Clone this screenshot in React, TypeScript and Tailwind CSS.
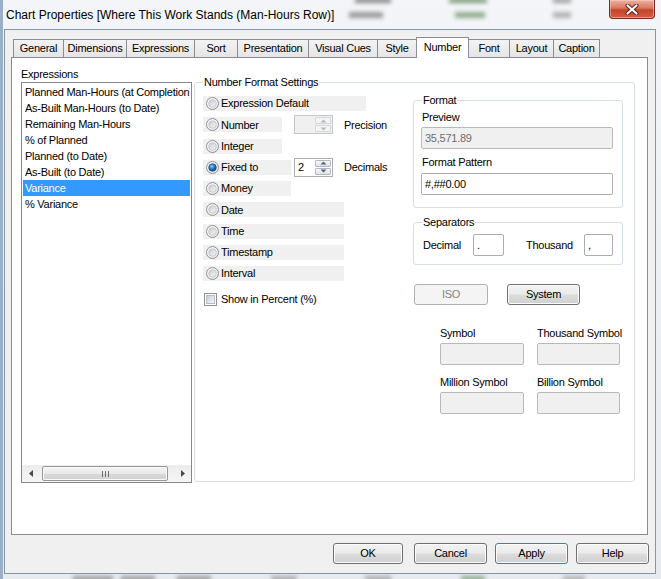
import React from 'react';

const tabs = [
  { label: 'General', w: 'w-[51px]' },
  { label: 'Dimensions', w: 'w-[64px]' },
  { label: 'Expressions', w: 'w-[69px]' },
  { label: 'Sort', w: 'w-[44px]' },
  { label: 'Presentation', w: 'w-[72px]' },
  { label: 'Visual Cues', w: 'w-[70px]' },
  { label: 'Style', w: 'w-[40px]' },
  { label: 'Number', w: 'w-[53px]', active: true },
  { label: 'Font', w: 'w-[42px]' },
  { label: 'Layout', w: 'w-[45px]' },
  { label: 'Caption', w: 'w-[47px]' },
];

const expressions = [
  'Planned Man-Hours (at Completion)',
  'As-Built Man-Hours (to Date)',
  'Remaining Man-Hours',
  '% of Planned',
  'Planned (to Date)',
  'As-Built (to Date)',
  'Variance',
  '% Variance',
];

type Fmt = { label: string; w: string; checked?: boolean; spin?: 'precision' | 'decimals' };

const formats: Fmt[] = [
  { label: 'Expression Default', w: 'w-[163px]' },
  { label: 'Number', w: 'w-[79px]', spin: 'precision' },
  { label: 'Integer', w: 'w-[79px]' },
  { label: 'Fixed to', w: 'w-[88px]', checked: true, spin: 'decimals' },
  { label: 'Money', w: 'w-[88px]' },
  { label: 'Date', w: 'w-[141px]' },
  { label: 'Time', w: 'w-[141px]' },
  { label: 'Timestamp', w: 'w-[141px]' },
  { label: 'Interval', w: 'w-[141px]' },
];

// blurred bits of the window behind, seen through the glass frame
const blobs = [
  'left-[352px] top-[-2px] w-[36px] h-[5px] bg-[#8a8a8a]',
  'left-[446px] top-[-2px] w-[38px] h-[5px] bg-[#7f9f7f]',
  'left-[550px] top-[-2px] w-[18px] h-[5px] bg-[#a0a0a0]',
  'left-[346px] top-[12px] w-[34px] h-[6px] bg-[#9a9a9a]',
  'left-[452px] top-[12px] w-[30px] h-[6px] bg-[#8fae8f]',
  'left-[550px] top-[12px] w-[18px] h-[6px] bg-[#b2b2b2]',
  'left-[70px] bottom-[-2px] w-[40px] h-[5px] bg-[#9a9a9a]',
  'left-[118px] bottom-[-2px] w-[34px] h-[5px] bg-[#9a9a9a]',
  'left-[174px] bottom-[-2px] w-[34px] h-[5px] bg-[#9a9a9a]',
  'left-[268px] bottom-[-2px] w-[26px] h-[5px] bg-[#a8a8a8]',
  'left-[362px] bottom-[-2px] w-[26px] h-[5px] bg-[#a8a8a8]',
  'left-[458px] bottom-[-2px] w-[24px] h-[5px] bg-[#8fa88f]',
  'left-[560px] bottom-[-2px] w-[22px] h-[5px] bg-[#b0b0b0]',
];

const btnBg =
  'bg-[linear-gradient(to_bottom,#f2f2f2_0%,#ebebeb_48%,#dddddd_52%,#cfcfcf_100%)] shadow-[inset_0_0_0_1px_#fbfbfb]';

const Radio: React.FC<{ checked?: boolean }> = ({ checked }) => (
  <svg width="13" height="13" viewBox="0 0 13 13" className="shrink-0">
    <defs>
      <linearGradient id="rdOuter" x1="0" y1="0" x2="1" y2="1">
        <stop offset="0" stopColor="#fdfdfd" />
        <stop offset="1" stopColor="#e6e6e6" />
      </linearGradient>
      <linearGradient id="rdInner" x1="0" y1="0" x2="1" y2="1">
        <stop offset="0" stopColor="#c9ccd1" />
        <stop offset="1" stopColor="#f5f5f5" />
      </linearGradient>
      <radialGradient id="rdDot" cx="0.4" cy="0.35" r="0.7">
        <stop offset="0" stopColor="#8fd0ff" />
        <stop offset="0.45" stopColor="#2c7fcf" />
        <stop offset="1" stopColor="#0e3d75" />
      </radialGradient>
    </defs>
    <circle cx="6.5" cy="6.5" r="6" fill="url(#rdOuter)" stroke="#8e8f8f" />
    <circle
      cx="6.5"
      cy="6.5"
      r="3.8"
      fill={checked ? 'url(#rdDot)' : 'url(#rdInner)'}
      stroke={checked ? '#1b4a7a' : '#b9bcc1'}
      strokeWidth="0.7"
    />
  </svg>
);

const Checkbox: React.FC = () => (
  <div className="w-[13px] h-[13px] shrink-0 border border-[#8e8f8f] bg-white p-[1px]">
    <div className="w-full h-full border border-[#b9bcc1] bg-[linear-gradient(135deg,#cbcfd5,#f6f6f6)]" />
  </div>
);

const Arrow: React.FC<{ up?: boolean; disabled?: boolean }> = ({ up, disabled }) => (
  <svg width="7" height="4" viewBox="0 0 7 4">
    <path d={up ? 'M0.5 3.5 L3.5 0.5 L6.5 3.5 Z' : 'M0.5 0.5 L3.5 3.5 L6.5 0.5 Z'} fill={disabled ? '#b8b8b8' : '#4d6185'} />
  </svg>
);

const Spinner: React.FC<{ value?: string; disabled?: boolean; className?: string }> = ({ value, disabled, className }) => (
  <div
    className={`flex w-[39px] h-[19px] border ${
      disabled ? 'border-[#c3c6ca] bg-[#f0f0f0]' : 'border-[#abadb3] bg-white'
    } ${className ?? ''}`}
  >
    <div className="flex-1 pl-[3px] leading-[17px]">{value}</div>
    <div className="w-[18px] flex flex-col p-[1px] gap-[1px]">
      {[true, false].map((up) => (
        <div
          key={String(up)}
          className={`flex-1 flex items-center justify-center rounded-[1px] border ${
            disabled
              ? 'border-[#d4d6d9] bg-[#f4f4f4]'
              : 'border-[#b5b9bf] bg-[linear-gradient(to_bottom,#f7f8f9,#dde1e6)]'
          }`}
        >
          <Arrow up={up} disabled={disabled} />
        </div>
      ))}
    </div>
  </div>
);

const TextBox: React.FC<{ value?: string; disabled?: boolean; className?: string }> = ({ value, disabled, className }) => (
  <div
    className={`h-[22px] rounded-[2px] border px-[3px] leading-[20px] ${
      disabled ? 'border-[#b6babf] bg-[#f0f0f0] text-[#6d6d6d]' : 'border-[#abadb3] bg-white'
    } ${className ?? ''}`}
  >
    {value}
  </div>
);

const Group: React.FC<{ title: string; className?: string; children: React.ReactNode }> = ({ title, className, children }) => (
  <div className={`border border-[#d5dfe5] rounded-[3px] flex flex-col ${className ?? ''}`}>
    <span className="-mt-[7px] ml-[8px] px-[1px] self-start bg-white leading-[13px]">{title}</span>
    {children}
  </div>
);

const Button: React.FC<{ label: string; className?: string; focused?: boolean; disabled?: boolean }> = ({
  label,
  className,
  focused,
  disabled,
}) => (
  <div
    className={`h-[21px] rounded-[3px] border flex items-center justify-center ${
      disabled
        ? 'border-[#adb2b5] bg-[#f4f4f4] text-[#838383]'
        : focused
        ? `border-[#3c7fb1] ${btnBg} shadow-[inset_0_0_0_1px_#b9e2f8]`
        : `border-[#707070] ${btnBg}`
    } ${className ?? ''}`}
  >
    {label}
  </div>
);

export default function App() {
  return (
    <div className="relative w-[661px] h-[579px] overflow-hidden flex flex-col border-l-[3px] border-l-[#9bb0c7] bg-[linear-gradient(to_bottom,#f3f5f8,#e7ebef)] font-['Liberation_Sans',Arial,sans-serif] text-[11px] tracking-[-0.25px] text-black">
      {blobs.map((b) => (
        <div key={b} className={`absolute ${b} blur-[2px]`} />
      ))}

      {/* title bar */}
      <div className="relative h-[29px] shrink-0 flex items-start">
        <span className="ml-[3px] mt-[7px] text-[12px] leading-[16px] tracking-normal">
          Chart Properties [Where This Work Stands (Man-Hours Row)]
        </span>
      </div>
      <div className="absolute right-[6px] top-0 w-[46px] h-[19px] rounded-b-[4px] border border-t-0 border-[#7a2c20] bg-[linear-gradient(to_bottom,#eab3a5_0%,#d8775f_45%,#c6432b_55%,#d45f45_100%)] shadow-[inset_0_0_0_1px_rgba(255,220,210,0.45)] flex items-center justify-center">
        <svg width="14" height="11" viewBox="0 0 14 11">
          <path d="M2.5 1.5 L11.5 9.5 M11.5 1.5 L2.5 9.5" stroke="#5a1a10" strokeWidth="4" strokeLinecap="round" />
          <path d="M2.5 1.5 L11.5 9.5 M11.5 1.5 L2.5 9.5" stroke="#ffffff" strokeWidth="2.2" strokeLinecap="round" />
        </svg>
      </div>

      {/* client area */}
      <div className="relative ml-[1px] w-[652px] h-[545px] border border-[#8796a6] bg-[#f0f0f0] flex flex-col">
        {/* tab strip */}
        <div className="relative z-10 mt-[7px] ml-[8px] h-[20px] flex items-end">
          {tabs.map((t, i) => (
            <div
              key={t.label}
              className={`${t.w} ${i > 0 ? '-ml-px' : ''} flex items-center justify-center border border-b-0 border-[#898c95] ${
                t.active
                  ? 'relative z-10 h-[21px] -mb-px bg-white pb-[2px]'
                  : 'h-[18px] bg-[linear-gradient(to_bottom,#f3f3f3,#e5e5e5)]'
              }`}
            >
              {t.label}
            </div>
          ))}
        </div>

        {/* tab panel */}
        <div className="ml-[6px] w-[637px] h-[478px] border border-[#898c95] bg-white flex pl-[9px] pt-[8px]">
          {/* expressions list */}
          <div className="flex flex-col">
            <div className="h-[16px] leading-[16px]">Expressions</div>
            <div className="w-[171px] h-[401px] border border-[#828790] bg-white flex flex-col">
              <div className="flex-1 px-[1px] pt-[1px] overflow-hidden">
                {expressions.map((e) => (
                  <div
                    key={e}
                    className={`h-[16px] leading-[16px] px-[2px] whitespace-nowrap overflow-hidden ${
                      e === 'Variance' ? 'bg-[#3399ff] text-white' : ''
                    }`}
                  >
                    {e}
                  </div>
                ))}
              </div>
              <div className="h-[17px] flex items-center bg-[linear-gradient(to_bottom,#ececec,#f6f6f6)]">
                <div className="w-[17px] h-full flex items-center justify-center">
                  <svg width="4" height="7" viewBox="0 0 4 7">
                    <path d="M4 0 L0 3.5 L4 7 Z" fill="#4a4a4a" />
                  </svg>
                </div>
                <div className="ml-[3px] w-[126px] h-[15px] rounded-[2px] border border-[#979797] bg-[linear-gradient(to_bottom,#f4f4f4,#e9e9e9_50%,#d9d9d9_51%,#d2d2d2)] shadow-[inset_0_0_0_1px_#fafafa] flex items-center justify-center gap-[2px]">
                  <div className="w-px h-[6px] bg-[#6d6d6d]" />
                  <div className="w-px h-[6px] bg-[#6d6d6d]" />
                  <div className="w-px h-[6px] bg-[#6d6d6d]" />
                </div>
                <div className="flex-1" />
                <div className="w-[17px] h-full flex items-center justify-center">
                  <svg width="4" height="7" viewBox="0 0 4 7">
                    <path d="M0 0 L4 3.5 L0 7 Z" fill="#4a4a4a" />
                  </svg>
                </div>
              </div>
            </div>
          </div>

          {/* number format settings */}
          <Group title="Number Format Settings" className="ml-[2px] mt-[16px] w-[441px] h-[400px]">
            <div className="flex">
              <div className="w-[218px] pt-[4px] flex flex-col">
                {formats.map((f) => (
                  <div key={f.label} className="h-[21.25px] flex items-center">
                    <div className={`${f.w} ml-[8px] h-[15px] bg-[#f0f0f0] flex items-center pl-[3px] gap-[2px]`}>
                      <Radio checked={f.checked} />
                      <span>{f.label}</span>
                    </div>
                    {f.spin === 'precision' && (
                      <>
                        <Spinner disabled className="ml-[12px]" />
                        <span className="ml-[11px]">Precision</span>
                      </>
                    )}
                    {f.spin === 'decimals' && (
                      <>
                        <Spinner value="2" className="ml-[3px]" />
                        <span className="ml-[11px]">Decimals</span>
                      </>
                    )}
                  </div>
                ))}
                <div className="mt-[5px] h-[20px] flex items-center ml-[9px] gap-[4px]">
                  <Checkbox />
                  <span>Show in Percent (%)</span>
                </div>
              </div>

              <div className="w-[210px] flex flex-col">
                <Group title="Format" className="mt-[11px] pb-[12px]">
                  <div className="mt-[4px] ml-[8px] leading-[13px]">Preview</div>
                  <TextBox value="35,571.89" disabled className="mt-[3px] ml-[7px] w-[192px]" />
                  <div className="mt-[7px] ml-[8px] leading-[13px]">Format Pattern</div>
                  <TextBox value="#,##0.00" className="mt-[4px] ml-[7px] w-[192px]" />
                </Group>

                <Group title="Separators" className="mt-[14px] pb-[8px]">
                  <div className="mt-[5px] ml-[9px] flex items-center">
                    <span className="w-[50px]">Decimal</span>
                    <TextBox value="." className="w-[31px]" />
                    <span className="ml-[22px] w-[58px]">Thousand</span>
                    <TextBox value="," className="w-[29px]" />
                  </div>
                </Group>

                <div className="mt-[19px] flex">
                  <Button label="ISO" disabled className="ml-[1px] w-[74px]" />
                  <Button label="System" className="ml-[19px] w-[73px]" />
                </div>

                <div className="mt-[22px] ml-[27px] grid grid-cols-[84px_83px] gap-x-[13px] whitespace-nowrap">
                  <div className="leading-[13px]">Symbol</div>
                  <div className="leading-[13px]">Thousand Symbol</div>
                  <TextBox disabled className="mt-[3px]" />
                  <TextBox disabled className="mt-[3px]" />
                  <div className="mt-[11px] leading-[13px]">Million Symbol</div>
                  <div className="mt-[11px] leading-[13px]">Billion Symbol</div>
                  <TextBox disabled className="mt-[3px]" />
                  <TextBox disabled className="mt-[3px]" />
                </div>
              </div>
            </div>
          </Group>
        </div>

        {/* dialog buttons */}
        <div className="mt-[8px] flex justify-end pr-[6px]">
          <Button label="OK" className="w-[70px]" />
          <Button label="Cancel" className="ml-[11px] w-[73px]" />
          <Button label="Apply" focused className="ml-[8px] w-[73px]" />
          <Button label="Help" className="ml-[8px] w-[73px]" />
        </div>
      </div>
    </div>
  );
}
